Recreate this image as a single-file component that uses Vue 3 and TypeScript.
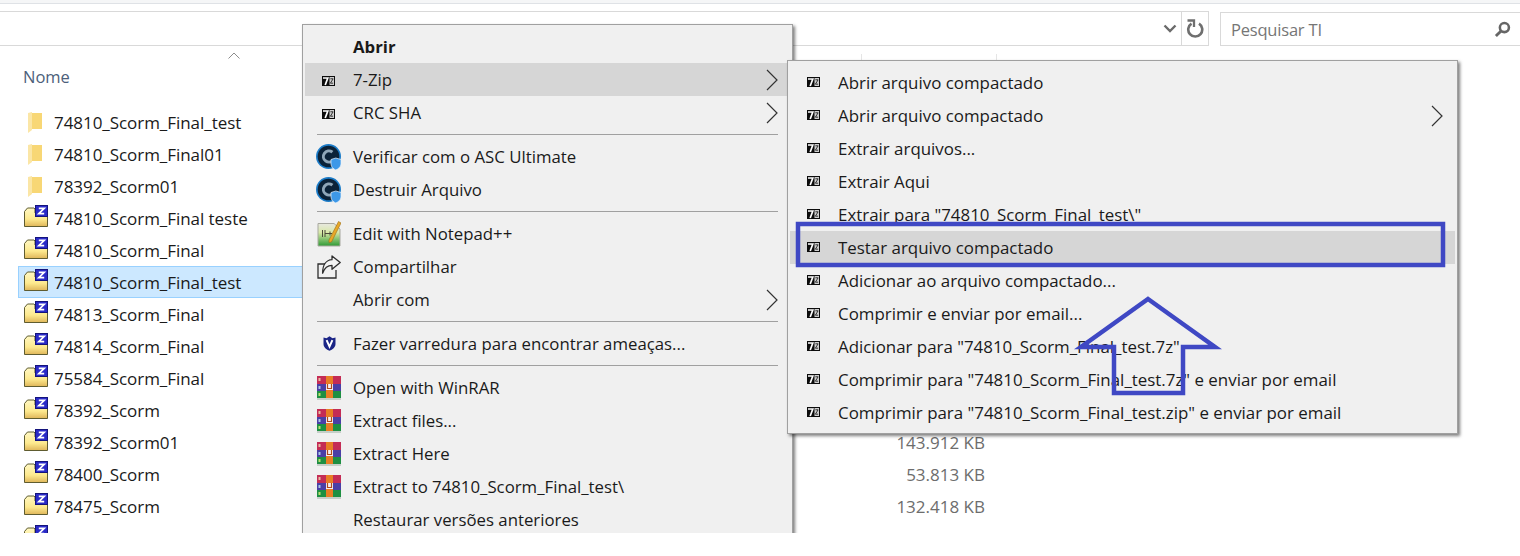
<script setup lang="ts">
interface FileRow { name: string; kind: 'folder' | 'zip'; size?: string; selected?: boolean }
interface MenuRow { label?: string; icon?: string; bold?: boolean; sub?: boolean; active?: boolean; sep?: boolean }

const files: FileRow[] = [
  { name: '74810_Scorm_Final_test', kind: 'folder' },
  { name: '74810_Scorm_Final01', kind: 'folder' },
  { name: '78392_Scorm01', kind: 'folder' },
  { name: '74810_Scorm_Final teste', kind: 'zip' },
  { name: '74810_Scorm_Final', kind: 'zip' },
  { name: '74810_Scorm_Final_test', kind: 'zip', selected: true },
  { name: '74813_Scorm_Final', kind: 'zip' },
  { name: '74814_Scorm_Final', kind: 'zip' },
  { name: '75584_Scorm_Final', kind: 'zip' },
  { name: '78392_Scorm', kind: 'zip' },
  { name: '78392_Scorm01', kind: 'zip', size: '143.912 KB' },
  { name: '78400_Scorm', kind: 'zip', size: '53.813 KB' },
  { name: '78475_Scorm', kind: 'zip', size: '132.418 KB' },
  { name: '78477_Scorm', kind: 'zip', size: '130.251 KB' },
]

const mainMenu: MenuRow[] = [
  { label: 'Abrir', bold: true },
  { label: '7-Zip', icon: 'seven', sub: true, active: true },
  { label: 'CRC SHA', icon: 'seven', sub: true },
  { sep: true },
  { label: 'Verificar com o ASC Ultimate', icon: 'asc' },
  { label: 'Destruir Arquivo', icon: 'asc' },
  { sep: true },
  { label: 'Edit with Notepad++', icon: 'npp' },
  { label: 'Compartilhar', icon: 'share' },
  { label: 'Abrir com', sub: true },
  { sep: true },
  { label: 'Fazer varredura para encontrar ameaças...', icon: 'mb' },
  { sep: true },
  { label: 'Open with WinRAR', icon: 'rar' },
  { label: 'Extract files...', icon: 'rar' },
  { label: 'Extract Here', icon: 'rar' },
  { label: 'Extract to 74810_Scorm_Final_test\\', icon: 'rar' },
  { label: 'Restaurar versões anteriores' },
]

const subMenu: MenuRow[] = [
  { label: 'Abrir arquivo compactado', icon: 'seven' },
  { label: 'Abrir arquivo compactado', icon: 'seven', sub: true },
  { label: 'Extrair arquivos...', icon: 'seven' },
  { label: 'Extrair Aqui', icon: 'seven' },
  { label: 'Extrair para "74810_Scorm_Final_test\\"', icon: 'seven' },
  { label: 'Testar arquivo compactado', icon: 'seven', active: true },
  { label: 'Adicionar ao arquivo compactado...', icon: 'seven' },
  { label: 'Comprimir e enviar por email...', icon: 'seven' },
  { label: 'Adicionar para "74810_Scorm_Final_test.7z"', icon: 'seven' },
  { label: 'Comprimir para "74810_Scorm_Final_test.7z" e enviar por email', icon: 'seven' },
  { label: 'Comprimir para "74810_Scorm_Final_test.zip" e enviar por email', icon: 'seven' },
]

const menus = [
  { cls: 'menu-main', rows: mainMenu },
  { cls: 'menu-sub', rows: subMenu },
]
</script>

<template>
  <div class="page">
    <svg class="defs" width="0" height="0" aria-hidden="true">
      <defs>
        <linearGradient id="zipfill" x1="0" y1="0" x2="0" y2="1">
          <stop offset="0" stop-color="#fff8c4" />
          <stop offset="0.6" stop-color="#fde98e" />
          <stop offset="1" stop-color="#dfb65a" />
        </linearGradient>
        <linearGradient id="nppfill" x1="0" y1="0" x2="0" y2="1">
          <stop offset="0" stop-color="#e8e8e0" />
          <stop offset="0.4" stop-color="#d8e8a8" />
          <stop offset="1" stop-color="#2f9a35" />
        </linearGradient>
        <symbol id="folder" viewBox="0 0 14 21">
          <path d="M3 1H14V17H3Z" fill="#f8d775" />
          <path d="M0 1 4 0V18L0 21Z" fill="#fbe6a6" />
        </symbol>
        <symbol id="zip" viewBox="0 0 24 22">
          <path d="M.5 21.500V6.500L3.500 3H10L11 4V8H23.500V21.500Z" fill="url(#zipfill)" stroke="#5f5c30" />
          <rect x="11.500" y=".5" width="12" height="11" fill="#2a2ac8" stroke="#14147c" />
          <path d="M14.800 3.400H20.200L14.800 8.600H20.200" fill="none" stroke="#fff" stroke-width="1.700" />
        </symbol>
        <symbol id="seven" viewBox="0 0 13 10">
          <rect width="13" height="10" fill="#0c0c0c" />
          <path d="M1 2H5.800L3.200 9" fill="none" stroke="#fff" stroke-width="1.700" />
          <rect x="7.500" y="1" width="4.500" height="8" fill="#cfcfcf" />
          <path d="M8.400 2.800H11.100L8.400 7.200H11.100" fill="none" stroke="#222" stroke-width=".9" />
        </symbol>
        <symbol id="asc" viewBox="0 0 26 26">
          <circle cx="12.500" cy="12.500" r="12.500" fill="#1c7cc8" />
          <circle cx="12.500" cy="12.500" r="10.800" fill="#0b2238" />
          <circle cx="13" cy="12.500" r="5.600" fill="none" stroke="#8fa6b8" stroke-width="3" stroke-dasharray="26 9" transform="rotate(35 13 12.500)" />
          <path d="M15 15.500 19.800 14 25 15.500V20C25 23 22 25 19.800 26 17.500 25 15 23 15 20Z" fill="#3d98e8" stroke="#e8f2fb" stroke-width=".7" />
        </symbol>
        <symbol id="npp" viewBox="0 0 24 26">
          <path d="M1 2.500H17L23 8V25H1Z" fill="url(#nppfill)" stroke="#a8a8a0" />
          <path d="M5.500 9V16M8 9V16M8 12.500H15M13 10.500V14.500" fill="none" stroke="#4a4a3a" />
          <path d="M21.500 .5 24 2 14.500 21 12 21.500 12 19Z" fill="#e8a828" stroke="#9c6c14" stroke-width=".6" />
        </symbol>
        <symbol id="share" viewBox="0 0 24 24">
          <path d="M10 9H1V23H19V15" fill="none" stroke="#2e2e2e" stroke-width="1.300" />
          <path d="M15 .9 23.200 7.600 15 14.300V10.400C11 10.400 7.700 12.400 5.600 18.200 5.600 10 9.200 5 15 4.700Z" fill="#f4f4f4" stroke="#2e2e2e" stroke-width="1.300" stroke-linejoin="round" />
        </symbol>
        <symbol id="mb" viewBox="0 0 13 15">
          <path d="M.5 1.500 3.500 2.300 6.500 .3 9.500 2.300 12.500 1.500V8C12.500 11.500 9.500 13.400 6.500 14.800 3.500 13.400 .5 11.500 .5 8Z" fill="#1b2586" />
          <path d="M3.600 4.200 6.500 10.600 9.400 4.200" fill="none" stroke="#fff" stroke-width="2" />
        </symbol>
        <symbol id="rar" viewBox="0 0 24 24">
          <rect y="0" width="24" height="8" fill="#c42c55" />
          <rect y="8" width="24" height="7" fill="#4a3fa6" />
          <rect y="15" width="24" height="7" fill="#1e8f42" />
          <rect y="22" width="24" height="2" fill="#c6cfc8" />
          <rect x="9" y="0" width="7" height="22" fill="#e87e24" />
          <rect x="9" y="8" width="7" height="6" fill="#f4f0f0" />
          <path d="M10.500 8V12.500H14.500V8" fill="none" stroke="#b0481c" stroke-width="1.200" />
          <rect x="1.500" y="2" width="2" height="3" fill="#e8b8a0" />
          <rect x="1.500" y="10" width="2" height="3" fill="#a8c8e8" />
          <rect x="1.500" y="17" width="2" height="3" fill="#b8e070" />
        </symbol>
      </defs>
    </svg>

    <div class="explorer">
      <div class="strip"></div>
      <div class="toolbar">
        <div class="address">
          <span class="addr-fill"></span>
          <svg class="addr-chev" viewBox="0 0 14 9" width="14" height="9"><path d="M1.500 1.500 7 7 12.500 1.500" fill="none" stroke="#6b6b6b" stroke-width="2.400" /></svg>
          <span class="addr-refresh">
            <svg viewBox="0 0 18 20" width="18" height="20">
              <path d="M5.500 4.600A7 7 0 1 0 13 4.600" fill="none" stroke="#6f6f6f" stroke-width="2.600" />
              <path d="M1.500 1.500H8V8" fill="none" stroke="#6f6f6f" stroke-width="2.300" />
            </svg>
          </span>
        </div>
        <div class="search">
          <span>Pesquisar TI</span>
          <svg viewBox="0 0 18 18" width="17" height="17">
            <circle cx="11" cy="7" r="4.800" fill="none" stroke="#666" stroke-width="2.700" />
            <path d="M7.500 10.500 2 16" fill="none" stroke="#666" stroke-width="3" />
          </svg>
        </div>
      </div>

      <div class="col-head">
        <div class="col col-name">
          <span>Nome</span>
          <svg class="sort" viewBox="0 0 12 7" width="12" height="7"><path d="M.5 6.500 6 1 11.500 6.500" fill="none" stroke="#8c8c8c" /></svg>
        </div>
        <div class="col col-size"></div>
      </div>

      <div v-for="(f, i) in files" :key="i" class="file" :class="{ selected: f.selected }">
        <span class="file-icon">
          <svg v-if="f.kind === 'folder'" class="folder-icon" width="14" height="21"><use href="#folder" /></svg>
          <svg v-else class="zip-icon" width="24" height="22"><use href="#zip" /></svg>
        </span>
        <span class="file-name">{{ f.name }}</span>
        <span class="file-size">{{ f.size }}</span>
      </div>

      <div v-for="m in menus" :key="m.cls" class="menu" :class="m.cls">
        <template v-for="(r, i) in m.rows" :key="i">
          <div v-if="r.sep" class="sep"></div>
          <div v-else class="item" :class="{ active: r.active, bold: r.bold }">
            <span class="item-icon">
              <svg v-if="r.icon === 'seven'" class="seven-icon" width="13" height="10"><use href="#seven" /></svg>
              <svg v-else-if="r.icon === 'asc'" width="26" height="26"><use href="#asc" /></svg>
              <svg v-else-if="r.icon === 'npp'" width="24" height="26"><use href="#npp" /></svg>
              <svg v-else-if="r.icon === 'share'" width="24" height="24"><use href="#share" /></svg>
              <svg v-else-if="r.icon === 'mb'" width="13" height="15"><use href="#mb" /></svg>
              <svg v-else-if="r.icon === 'rar'" width="24" height="24"><use href="#rar" /></svg>
            </span>
            <span class="item-label">{{ r.label }}</span>
            <svg v-if="r.sub" class="chev" viewBox="0 0 12 22" width="12" height="22"><path d="M1 1 11 11 1 21" fill="none" stroke="#333" stroke-width="1.200" /></svg>
          </div>
        </template>
      </div>

      <svg class="annotation" width="1520" height="533" viewBox="0 0 1520 533">
        <rect x="798" y="224" width="645" height="41" fill="none" stroke="#3f48c4" stroke-width="4.500" />
        <path d="M1148 299 1215 347H1183V393H1114V347H1081Z" fill="none" stroke="#3f48c4" stroke-width="4.500" stroke-linejoin="miter" />
      </svg>
    </div>
  </div>
</template>

<style>
html, body { margin: 0; background: #fff; }
</style>

<style scoped>
.page {
  width: 1520px;
  height: 556px;
  background: #fff;
  font-family: "Open Sans", "Noto Sans", sans-serif;
  overflow: hidden;
}
.defs { position: absolute; }
.explorer {
  position: relative;
  height: 533px;
  overflow: hidden;
  background: #fff;
}
.strip {
  height: 3px;
  background: #f5f6f7;
  border-bottom: 1px solid #dfe2e6;
}
.toolbar {
  display: flex;
  align-items: flex-end;
  height: 42px;
  gap: 11px;
  margin: 0 -1px;
}
.address {
  display: flex;
  align-items: center;
  width: 1208px;
  height: 33px;
  border: 1px solid #d9d9d9;
}
.addr-fill { flex: 1; }
.addr-chev { margin-right: 4px; }
.addr-refresh {
  display: flex;
  align-items: center;
  justify-content: center;
  width: 26px;
  height: 100%;
  border-left: 1px solid #d9d9d9;
}
.search {
  flex: 1;
  display: flex;
  align-items: center;
  justify-content: space-between;
  height: 32px;
  padding: 0 9px 0 10px;
  border: 1px solid #d9d9d9;
  font-size: 16.5px;
  color: #767676;
  letter-spacing: -.2px;
}
.col-head {
  display: flex;
  height: 60px;
  padding-top: 8px;
  box-sizing: border-box;
}
.col { position: relative; border-right: 1px solid #e5e5e5; box-sizing: border-box; }
.col-name {
  width: 862px;
  padding: 11px 0 0 23px;
  font-size: 16.5px;
  color: #4c607a;
}
.col-size { width: 135px; }
.sort { position: absolute; left: 228px; top: -2px; }
.file {
  display: grid;
  grid-template-columns: 24px 1fr auto;
  column-gap: 6px;
  align-items: center;
  width: 982px;
  height: 32px;
  margin-left: 18px;
  padding: 0 14px 0 5px;
  box-sizing: border-box;
  border: 1px solid transparent;
  font-size: 17px;
  color: #1a1a1a;
}
.file.selected { background: #cce8ff; border-color: #99d1ff; }
.file-icon { display: flex; justify-content: flex-start; height: 22px; align-items: center; }
.folder-icon { margin-left: 4px; }
.zip-icon { margin-top: -5px; }
.file-name { letter-spacing: -.05px; white-space: nowrap; }
.file-size { color: #6d6d6d; }
.menu {
  position: absolute;
  box-sizing: border-box;
  background: #f0f0f0;
  border: 1px solid #a0a0a0;
  padding: 5px 2px 4px;
  box-shadow: 2px 2px 3px rgba(0, 0, 0, .5);
  color: #1a1a1a;
}
.menu-main { left: 302px; top: 24px; width: 491px; font-size: 16.8px; }
.menu-sub { left: 787px; top: 60px; width: 671px; font-size: 16.9px; }
.item {
  display: flex;
  align-items: center;
  height: 33px;
  white-space: nowrap;
}
.item.active { background: #d6d6d6; }
.item.bold { font-weight: 700; }
.item-icon {
  flex: none;
  display: flex;
  align-items: center;
  justify-content: center;
  width: 48px;
}
.seven-icon { margin-top: 2px; margin-right: 2px; }
.menu-sub .seven-icon { margin-top: -1px; }
.item-label { flex: 1; }
.chev { flex: none; margin-right: 12px; }
.sep {
  height: 1px;
  margin: 5px 12px;
  background: #a0a0a0;
}
.annotation {
  position: absolute;
  left: 0;
  top: 0;
  pointer-events: none;
}
</style>
